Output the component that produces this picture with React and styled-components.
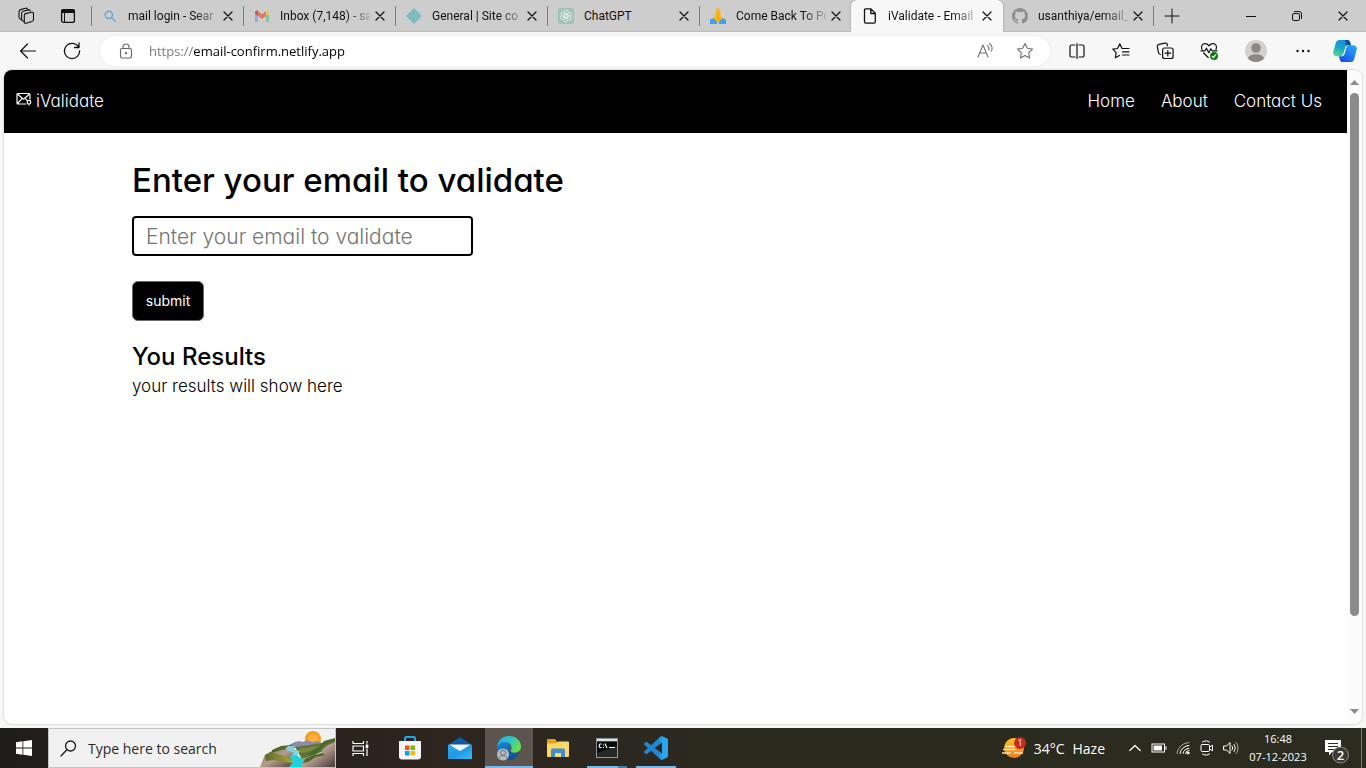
import React from 'react';
import styled, { createGlobalStyle, css } from 'styled-components';

const UI = '"Open Sans", "Noto Sans", sans-serif';
const SITE = 'Inter, "Open Sans", sans-serif';

const Global = createGlobalStyle`
  *, *::before, *::after { box-sizing: border-box; }
  body { margin: 0; font-family: ${UI}; font-size: 12px; color: #111; background: #f7f7f7; }
  button, input { font: inherit; color: inherit; }
  button { border: 0; padding: 0; background: none; cursor: pointer; }
  h1, h2, p, ul { margin: 0; padding: 0; }
  svg { display: block; flex: none; }
`;

const Window = styled.div`
  display: flex;
  flex-direction: column;
  min-height: 100vh;
`;

/* ---------- tab strip ---------- */

const TabStrip = styled.div`
  display: flex;
  height: 32px;
  background: #cdcdcd;
  box-shadow: inset 0 -1px 0 #bdbdbd;
`;

const separator = css`
  &::after {
    content: '';
    position: absolute;
    right: 0;
    top: 6px;
    width: 1px;
    height: 20px;
    background: #7c7c7c;
  }
`;

const StripTools = styled.div`
  display: flex;
  flex: none;
  width: 92px;
  padding: 0 3px 0 5px;
  align-items: center;
  position: relative;
  ${separator}
`;

const IconButton = styled.button`
  display: flex;
  flex: none;
  align-items: center;
  justify-content: center;
  width: ${(p) => p.$w || 44}px;
  height: 100%;
  margin: 0 ${(p) => p.$gap || 0}px;
  color: ${(p) => p.$color || '#111'};
`;

const Tab = styled.div`
  position: relative;
  display: flex;
  align-items: center;
  flex: 0 1 152px;
  min-width: 0;
  padding: 0 8px 0 10px;
  gap: 10px;
  ${(p) => (p.$active
    ? 'margin: 0 -1px; padding-left: 11px; background: #f7f7f7; border-radius: 6px 6px 0 0; box-shadow: 0 0 2px #8a8a8a; clip-path: inset(0 -3px 0 -3px);'
    : '')}
  ${(p) => (p.$rule ? separator : '')}
`;

const TabTitle = styled.span`
  flex: 1;
  min-width: 0;
  font-family: Roboto, ${UI};
  white-space: nowrap;
  line-height: 20px;
  ${(p) => (p.$fade ? 'mask-image: linear-gradient(90deg, #000 calc(100% - 24px), rgba(0, 0, 0, 0.15));' : '')}
`;

const TabClose = styled.button`
  display: flex;
  flex: none;
  align-items: center;
  justify-content: center;
  width: 16px;
  height: 16px;
  margin-left: -8px;
`;

const WindowControls = styled.div`
  display: flex;
  margin-left: auto;
`;

/* ---------- toolbar ---------- */

const Toolbar = styled.div`
  display: flex;
  align-items: center;
  height: 38px;
  padding: 0 1px 0 6px;
  background: #f7f7f7;
`;

const AddressBar = styled.div`
  display: flex;
  flex: 1;
  align-items: center;
  height: 30px;
  margin: 0 5px 0 6px;
  padding: 0 5px 0 18px;
  border-radius: 15px;
  background: #fff;
  box-shadow: 0 0 3px #e4e4e4;
`;

const AddressInput = styled.input`
  flex: 1;
  min-width: 0;
  height: 24px;
  margin-left: 15px;
  padding: 0;
  border: 0;
  outline: 0;
  font-size: 13px;
  color: transparent;
  background: linear-gradient(90deg, #767676 44px, #000 44px);
  background-clip: text;
`;

/* ---------- page ---------- */

const Viewport = styled.div`
  display: flex;
  flex: 1;
  margin: 0 4px 4px;
  border-radius: 8px;
  overflow: hidden;
  background: #fff;
  box-shadow: 0 0 2px #a8a8a8;
`;

const Page = styled.div`
  flex: 1;
  min-width: 0;
  font-family: ${SITE};
  font-feature-settings: 'cv11';
  font-size: 17px;
  font-weight: 300;
  color: #000;
`;

const NavBar = styled.header`
  display: flex;
  align-items: center;
  justify-content: space-between;
  height: 63px;
  padding: 0 25px 2px 12px;
  background: #000;
  color: #fff;
`;

const Brand = styled.a`
  display: flex;
  gap: 4px;
  color: inherit;
  text-decoration: none;
`;

const NavLinks = styled.nav`
  display: flex;
  gap: 26px;
`;

const NavLink = styled.a`
  color: inherit;
  text-decoration: none;
`;

const Main = styled.main`
  display: flex;
  flex-direction: column;
  align-items: flex-start;
  padding: 23px 24px 24px 128px;
`;

const Title = styled.h1`
  font-size: 33px;
  font-weight: 500;
  line-height: 48px;
`;

const Form = styled.form`
  display: flex;
  flex-direction: column;
  align-items: flex-start;
  gap: 25px;
  margin: 12px 0 18px;
`;

const EmailInput = styled.input`
  width: 341px;
  max-width: 100%;
  height: 40px;
  padding: 0 12px;
  border: 2px solid #000;
  border-radius: 4px;
  font-size: 21px;
  &::placeholder { color: #757575; opacity: 1; }
`;

const Submit = styled.button`
  width: 72px;
  height: 40px;
  padding-bottom: 2px;
  border: 1px solid #6b6b6b;
  border-radius: 6px;
  background: #000;
  color: #fff;
  font-size: 14px;
  font-weight: 400;
`;

const Subtitle = styled.h2`
  font-size: 24px;
  font-weight: 500;
  line-height: 36px;
`;

const Result = styled.p`
  line-height: 22px;
`;

const ScrollBar = styled.div`
  display: flex;
  flex-direction: column;
  align-items: center;
  width: 15px;
  padding: 10px 0;
  background: #fbfbfb;
`;

const ScrollTrack = styled.div`
  flex: 1;
  width: 9px;
  margin: 8px 0;
`;

const ScrollThumb = styled.div`
  height: 86%;
  border-radius: 5px;
  background: #8b8b8b;
`;

/* ---------- task bar ---------- */

const TaskBar = styled.footer`
  display: flex;
  height: 40px;
  background: linear-gradient(90deg, #1f1d1a, #2d241f 30%, #2b2a1f 52%, #2b2b20);
  color: #fff;
`;

const SearchBox = styled.label`
  display: flex;
  flex: none;
  align-items: center;
  width: 288px;
  padding-left: 11px;
  border: 1px solid #c4c4c4;
  background: #f1f1f1;
  color: #1c1c1c;
`;

const SearchInput = styled.input`
  flex: 1;
  min-width: 0;
  margin-left: 11px;
  padding: 0;
  border: 0;
  outline: 0;
  background: none;
  font-size: 14px;
  &::placeholder { color: #2b2b2b; opacity: 1; }
`;

const TaskButton = styled.button`
  display: flex;
  flex: none;
  align-items: center;
  justify-content: center;
  width: ${(p) => p.$w || 49}px;
  height: 40px;
  color: #fff;
  background: ${(p) => (p.$active ? '#5b544f' : 'transparent')};
  box-shadow: ${(p) => (p.$active ? 'inset 0 -2px 0 #76b9ed' : 'none')};
`;

const RunningButton = styled(TaskButton)`
  background: linear-gradient(90deg, #76b9ed ${(p) => (p.$stacked ? '31px, #4c7ba0 31px' : '40px')}) center bottom / 40px 2px no-repeat;
`;

const Tray = styled.div`
  display: flex;
  align-items: center;
  margin-left: auto;
`;

const Weather = styled.button`
  display: flex;
  align-items: center;
  gap: 8px;
  height: 40px;
  margin-right: 18px;
  color: #fff;
  font-size: 14px;
`;

const TrayButton = styled.button`
  display: flex;
  align-items: center;
  justify-content: center;
  width: 24px;
  height: 40px;
  color: #fff;
`;

const Clock = styled.button`
  width: 70px;
  height: 40px;
  color: #fff;
  font-size: 11px;
  line-height: 18px;
  white-space: nowrap;
`;

const ActionCenter = styled.button`
  display: flex;
  align-items: center;
  justify-content: center;
  width: 48px;
  height: 40px;
  color: #fff;
`;

const DesktopEdge = styled.button`
  width: 5px;
  height: 40px;
  border-left: 1px solid #77766e;
`;

/* ---------- icons ---------- */

const Line = ({ s = 16, w = 1, vb = 16, children, ...rest }) => (
  <svg width={s} height={s} viewBox={`0 0 ${vb} ${vb}`} fill="none" stroke="currentColor" strokeWidth={w} strokeLinecap="round" strokeLinejoin="round" aria-hidden="true" {...rest}>
    {children}
  </svg>
);

const Workspaces = () => (
  <Line s={18} vb={18} w={1.1}>
    <path d="M8.600 6.600l6-1.300c1.200-.2 1.900.3 1.900 1.500v5.700c0 1.100-.5 1.700-1.600 2l-5.800 1.800c-1.100.3-1.800-.2-1.800-1.400V8.500c0-1.100.4-1.700 1.300-1.900z" />
    <path d="M7 14.500l-1.200-.5c-.8-.4-1.200-1-1.200-1.900V6.400c0-1.100.5-1.800 1.600-2.100l5.200-1.400c.9-.2 1.600.1 1.900 1M4.400 12.500l-1-.4C2.500 11.700 2 11 2 10V4.700c0-1.100.6-1.800 1.700-2.100l4.800-1.400c.9-.3 1.600 0 1.900.7" />
  </Line>
);

const TabActions = () => (
  <Line w={1.3}>
    <rect x="1.600" y="1.600" width="12.800" height="12.800" rx="2" />
    <path fill="currentColor" stroke="none" d="M1 5V3.500A2.500 2.500 0 013.500 1h9A2.500 2.500 0 0115 3.500V5z" />
    <path d="M4.500 5v9" strokeWidth="1" />
  </Line>
);

const Close = ({ s = 10 }) => <Line s={s} vb={10} w={1.2}><path d="M1 1l8 8M9 1L1 9" /></Line>;

const SearchFav = () => <Line w={1.5} color="#69a5d6"><circle cx="6.800" cy="6.800" r="3.600" /><path d="M9.700 9.700l3.600 3.600" /></Line>;

const GmailFav = () => (
  <svg width="16" height="16" viewBox="0 0 16 16" aria-hidden="true">
    <path fill="#85aeea" d="M1 5l3 2v7H2a1 1 0 01-1-1z" />
    <path fill="#7fc596" d="M15 5l-3 2v7h2a1 1 0 001-1z" />
    <path fill="#e5746c" d="M4 3.200l4 3 4-3V8l-4 3-4-3z" />
    <path fill="#c65b57" d="M1 4.200C1 2.600 2.800 2 4 3v5L1 5.800z" />
    <path fill="#edc95c" d="M15 4.200C15 2.600 13.200 2 12 3v5l3-2.200z" />
  </svg>
);

const NetlifyFav = () => (
  <svg width="16" height="16" viewBox="0 0 16 16" aria-hidden="true"><path fill="#7cbcba" d="M8 0l8 8-8 8-8-8z" /></svg>
);

const ChatFav = () => (
  <svg width="16" height="16" viewBox="0 0 16 16" aria-hidden="true">
    <rect width="16" height="16" rx="2.500" fill="#a3c1b6" />
    <g fill="none" stroke="#e8f0ed" strokeWidth=".9">
      {[0, 60, 120, 180, 240, 300].map((a) => (
        <path key={a} transform={`rotate(${a} 8 8)`} d="M6.200 7V4.500a2.200 2.200 0 014.100-1.100M6.200 7L8 5.900l3 1.700" />
      ))}
    </g>
  </svg>
);

const PrayFav = () => (
  <svg width="16" height="16" viewBox="0 0 16 16" aria-hidden="true">
    <path fill="#fbb70f" d="M8 0C6.900 0 6.400 1 6.200 2.200L5.300 7 3.800 10.500 3 12.500l3 2.300 2-1.300 2 1.300 3-2.300-.8-2L10.700 7l-.9-4.800C9.600 1 9.100 0 8 0z" />
    <path stroke="#f0980c" strokeWidth=".6" d="M8 5v8.500" />
    <path fill="#3f9ff2" d="M0 11.500l3.500-1.300L7 13.800V16H0zM16 11.500l-3.500-1.300L9 13.800V16h7z" />
  </svg>
);

const PageFav = () => (
  <Line w={1.3}><path d="M3.500.9h5.500l4.300 4.300v8.600a1.400 1.400 0 01-1.400 1.400H3.900a1.400 1.400 0 01-1.400-1.400V2A1 1 0 013.500.9zM8.800 1v4.500h4.400" /></Line>
);

const GithubFav = () => (
  <svg width="16" height="16" viewBox="0 0 16 16" aria-hidden="true">
    <path fill="#8c8f92" d="M8 0C3.580 0 0 3.580 0 8c0 3.540 2.290 6.530 5.470 7.590.4.070.55-.17.55-.38 0-.19-.01-.82-.01-1.490-2.010.37-2.530-.49-2.690-.94-.09-.23-.48-.94-.82-1.130-.28-.15-.68-.52-.01-.53.63-.01 1.080.58 1.230.82.72 1.210 1.870.87 2.330.66.07-.52.28-.87.51-1.070-1.780-.2-3.640-.89-3.640-3.950 0-.87.31-1.590.82-2.150-.08-.2-.36-1.020.08-2.120 0 0 .67-.21 2.200.82a7.600 7.600 0 014 0c1.530-1.040 2.200-.82 2.200-.82.44 1.100.16 1.920.08 2.120.51.56.82 1.270.82 2.150 0 3.070-1.870 3.750-3.650 3.950.29.25.54.73.54 1.480 0 1.070-.01 1.930-.01 2.200 0 .21.15.46.55.38A8 8 0 0016 8c0-4.420-3.580-8-8-8z" />
  </svg>
);

const BrandIcon = () => (
  <Line w={1.200}>
    <path d="M10 13H2a1 1 0 01-1-1V3.500a1 1 0 011-1h11a1 1 0 011 1V8M1.500 3l6 5.200 6-5.200M1.500 12.500l4.200-4.700M9.500 7.800l1.200 1.200" />
    <circle cx="13" cy="11.200" r="1.800" />
    <path d="M13 13v1" />
  </Line>
);

const Copilot = () => (
  <svg width="24" height="24" viewBox="0 0 24 24" aria-hidden="true">
    <defs>
      <linearGradient id="cpA" x1="0.600" y1="0" x2="0.200" y2="1"><stop stopColor="#1390e8" /><stop offset=".5" stopColor="#18a8c0" /><stop offset="1" stopColor="#5fd68b" /></linearGradient>
      <linearGradient id="cpB" x1="1" y1="0" x2="0.200" y2="1"><stop stopColor="#25b4f2" /><stop offset=".5" stopColor="#2180f4" /><stop offset="1" stopColor="#1551d6" /></linearGradient>
    </defs>
    <path fill="url(#cpA)" d="M6.500 1h7.700c1.800 0 2.500 1 3 2.600l.8 2.600h-2.500c-1.600 0-2.500.8-3 2.400l-1.800 6c-.6 1.800-1.600 2.600-3.400 2.600H3.500C.8 17.200-.3 15 .4 12.300L2.700 4.200C3.300 2.100 4.500 1 6.500 1z" />
    <path fill="url(#cpB)" d="M17.500 23H9.800c-1.800 0-2.500-1-3-2.600L6 17.200h2.500c1.600 0 2.500-.8 3-2.400l1.800-6c.6-1.800 1.600-2.600 3.400-2.600h3.800c2.700 0 3.800 2.200 3.100 4.900l-2.300 8.700c-.6 2.100-1.800 3.200-3.800 3.200z" />
    <path fill="#0d4f9d" d="M12 1h2.200c1.800 0 2.500 1 3 2.600l.8 2.600h-2.500c-1 0-1.800.3-2.300 1z" />
    <path fill="#f7f7f7" d="M15.800 6.300c-1.400.1-2 .9-2.500 2.300l-1.900 6.200c-.4 1.300-.9 2.100-2.100 2.400H8.200c1.300-.3 1.900-1.300 2.300-2.600l1.900-6.200c.5-1.500 1.300-2.100 3.400-2.100z" />
  </svg>
);

const Avatar = () => (
  <svg width="22" height="22" viewBox="0 0 22 22" aria-hidden="true">
    <circle cx="11" cy="11" r="11" fill="#d3d0cd" />
    <circle cx="11" cy="8" r="4.800" fill="#8b8785" />
    <path fill="#8b8785" d="M2.800 18.200C4 15.300 7 14.200 11 14.200s7 1.100 8.200 4A11 11 0 0111 22a11 11 0 01-8.200-3.800z" />
  </svg>
);

const Landscape = () => (
  <svg width="76" height="38" viewBox="0 0 76 38" aria-hidden="true">
    <defs>
      <linearGradient id="rock" x1="0" y1="0" x2="1" y2="1"><stop stopColor="#6d5f56" /><stop offset=".5" stopColor="#b79e90" /><stop offset="1" stopColor="#453a37" /></linearGradient>
      <linearGradient id="hill" x1="0" y1="0" x2="1" y2="0"><stop stopColor="#5f6b2e" /><stop offset="1" stopColor="#b0ab30" /></linearGradient>
    </defs>
    <circle cx="54" cy="10" r="8" fill="#f99d1c" />
    <circle cx="54" cy="10" r="5" fill="#fdb13c" />
    <path fill="#8c8ca4" d="M30 16l6-3 4-1 4 1 4-2 5 2 5-1 8 3v4H34z" />
    <path fill="url(#rock)" d="M1 38l5-12 12-7 12-2 8 5-4 16z" />
    <path fill="#4f6a26" d="M13 21l9-4 10-1 4 2-6 2-8 1-9 3z" />
    <path fill="url(#hill)" d="M6 26l6-3 7 2 9 3 8 4-3 2-9-1-9-2-8 1z" />
    <path fill="#60733a" d="M36 18l14-2 14-2 12-4v6L56 26l-13 4z" />
    <path fill="#7b8b3c" d="M40 20l13-2 10-2-12 6-9 2z" />
    <path fill="url(#rock)" d="M76 13v25H41l3-8 7-3 10-1 3-6 5-4z" />
    <path fill="#496b25" d="M76 9l-11 3-5 6-8 5-5 3 9-1 6-5 4-5 10-3zM52 27l11-3 3 2-9 2-8 5-5 1 2-4z" />
    <path fill="#7fd6de" d="M29 17h8l-5 3 9 2-2 4-3 2h-5l4-4-9-4z" />
    <path fill="#1fd2d9" d="M31 27l6-1 7 4-1 8H30l4-5z" />
  </svg>
);

const Store = () => (
  <svg width="24" height="24" viewBox="0 0 24 24" aria-hidden="true">
    <path fill="none" stroke="#25a4ea" strokeWidth="2" d="M7 6V2.200Q7 1 8.200 1h7.600Q17 1 17 2.200V6" />
    <path fill="#f5f5f5" d="M1 5h22v15.500a3 3 0 01-3 3H4a3 3 0 01-3-3z" />
    <path fill="#f25022" d="M7 9.500h4.500V14H7z" /><path fill="#7fba00" d="M12.500 9.500H17V14h-4.500z" />
    <path fill="#00a4ef" d="M7 15h4.500v4.500H7z" /><path fill="#ffb900" d="M12.500 15H17v4.500h-4.500z" />
  </svg>
);

const Mail = () => (
  <svg width="24" height="24" viewBox="0 0 24 24" aria-hidden="true">
    <defs><linearGradient id="mail" x1="0" y1="0" x2="1" y2="1"><stop stopColor="#2bb0ef" /><stop offset=".5" stopColor="#2298e4" /><stop offset="1" stopColor="#2fc0f5" /></linearGradient></defs>
    <path fill="#0f59a8" d="M0 9L12 1l12 8z" />
    <path fill="#f1f4f8" d="M1 8.500h22L12 16z" />
    <path fill="url(#mail)" d="M0 8.500l12 6.500 12-6.500V23H0z" />
  </svg>
);

const Edge = () => (
  <svg width="26" height="26" viewBox="0 0 26 26" aria-hidden="true">
    <defs>
      <linearGradient id="edA" x1="0" y1="0" x2="1" y2=".5"><stop stopColor="#2aa7e6" /><stop offset=".6" stopColor="#32c8c0" /><stop offset="1" stopColor="#6adf4a" /></linearGradient>
      <linearGradient id="edB" x1="0" y1="0" x2=".6" y2="1"><stop stopColor="#1b8ede" /><stop offset="1" stopColor="#0c4f9e" /></linearGradient>
    </defs>
    <path fill="url(#edB)" d="M1.200 11C2 7 6 5.500 9 6c4 .4 6 3.500 5 6-1.500 4.500 3 7 9.500 5.500C21.500 22 17.500 25 13 25 6 25 0 19 1.200 11z" />
    <path fill="url(#edA)" d="M1.200 12C1.500 5.500 6.500 1 13 1c7 0 12 5 12 10.500 0 4-3 6.200-6.500 6.200-3 0-4.500-1.300-3.500-2.700 1.500-2.200.5-7.500-5.500-8C5 6.700 2 9 1.200 12z" />
    <circle cx="7" cy="19.500" r="6" fill="#b7bbc0" />
    <circle cx="7" cy="17.800" r="2.500" fill="none" stroke="#6d7278" />
    <path fill="none" stroke="#6d7278" d="M3 23.200c1-3.300 7-3.300 8 0" />
  </svg>
);

const Explorer = () => (
  <svg width="22" height="20" viewBox="0 0 22 20" aria-hidden="true">
    <path fill="#e3a21a" d="M0 2a1 1 0 011-1h7l2 2.500V6H0z" />
    <path fill="#ffd766" d="M0 5.500l9-.2L11 3.500h10a1 1 0 011 1V18a1 1 0 01-1 1H1a1 1 0 01-1-1z" />
    <path fill="#3f8ed0" d="M4 19v-7a1.500 1.500 0 011.500-1.500h11A1.500 1.500 0 0118 12v7h-4v-4H8v4z" />
  </svg>
);

const Terminal = () => (
  <svg width="22" height="20" viewBox="0 0 22 20" aria-hidden="true">
    <path fill="#8f9498" d="M0 0h22v20H0z" /><path fill="#dfe2e4" d="M1 1h20v2H1z" />
    <path fill="#0a0a0a" d="M1 3.500h20V19H1z" />
    <path fill="#444" d="M1 15L21 8v11H1z" opacity=".5" />
    <path stroke="#fff" strokeWidth="1.100" fill="none" d="M5.500 6H4L3.300 7v2L4 9.500h1.500M7.500 6.500v1M7.500 9v1M9 5.500l2 4.500M13 9.500h6" />
  </svg>
);

const Code = () => (
  <svg width="24" height="24" viewBox="0 0 24 24" aria-hidden="true">
    <defs><linearGradient id="code" x1="0" y1="0" x2="1" y2="0"><stop offset=".6" stopColor="#1f86cf" /><stop offset=".8" stopColor="#2ba6f0" /></linearGradient></defs>
    <path fill="url(#code)" d="M23.150 2.587L18.210.21a1.494 1.494 0 0 0-1.705.29l-9.460 8.630-4.120-3.128a.999.999 0 0 0-1.276.057L.327 7.261A1 1 0 0 0 .326 8.740L3.899 12 .326 15.260a1 1 0 0 0 .001 1.479L1.650 17.940a.999.999 0 0 0 1.276.057l4.120-3.128 9.460 8.630a1.492 1.492 0 0 0 1.704.290l4.942-2.377A1.500 1.500 0 0 0 24 20.060V3.939a1.500 1.500 0 0 0-.850-1.352zm-5.146 14.861L10.826 12l7.178-5.448v10.896z" />
  </svg>
);

const WeatherIcon = () => (
  <svg width="24" height="22" viewBox="0 0 24 22" aria-hidden="true">
    <defs><linearGradient id="sun" x1="0" y1="0" x2="0" y2="1"><stop stopColor="#fdc51c" /><stop offset="1" stopColor="#ee7d20" /></linearGradient></defs>
    <circle cx="12" cy="11" r="10" fill="url(#sun)" />
    <path stroke="#fbe3b4" strokeWidth="1.500" d="M3 9.500h10M1 12.500h12M0 16h9M12 16h9" />
    <circle cx="18" cy="6" r="6" fill="#c42b1c" />
    <text x="18" y="9" fill="#fff" fontSize="9" textAnchor="middle">1</text>
  </svg>
);

const Notifications = () => (
  <svg width="26" height="32" viewBox="0 0 26 32" aria-hidden="true">
    <path fill="#fff" d="M1 8h16v12H8l-3 3.500V20H1z" />
    <path stroke="#2b2b20" d="M4 11.500h10M4 14.500h10M4 17.500h6" />
    <circle cx="16.500" cy="23" r="8" fill="#3b3b36" stroke="#8d8d86" />
    <text x="16.500" y="28" fill="#fff" fontSize="13" fontWeight="600" textAnchor="middle">2</text>
  </svg>
);

const tabs = [
  { title: 'mail login - Sear', icon: SearchFav, fade: true },
  { title: 'Inbox (7,148) - sa', icon: GmailFav, fade: true },
  { title: 'General | Site co', icon: NetlifyFav, fade: true },
  { title: 'ChatGPT', icon: ChatFav },
  { title: 'Come Back To Po', icon: PrayFav, noRule: true, fade: true },
  { title: 'iValidate - Email', icon: PageFav, active: true, noRule: true, fade: true },
  { title: 'usanthiya/email_', icon: GithubFav, fade: true },
];

const navItems = ['Home', 'About', 'Contact Us'];

export default function App() {
  return (
    <Window>
      <Global />
      <TabStrip>
        <StripTools>
          <IconButton $w={42} aria-label="Workspaces"><Workspaces /></IconButton>
          <IconButton $w={42} aria-label="Tab actions"><TabActions /></IconButton>
        </StripTools>
        {tabs.map(({ title, icon: Icon, active, noRule, fade }) => (
          <Tab key={title} $active={active} $rule={!noRule}>
            <Icon />
            <TabTitle $fade={fade}>{title}</TabTitle>
            <TabClose aria-label="Close tab"><Close /></TabClose>
          </Tab>
        ))}
        <IconButton $w={36} aria-label="New tab"><Line><path d="M8 1v14M1 8h14" /></Line></IconButton>
        <WindowControls>
          <IconButton $w={46} aria-label="Minimize"><Line s={10} vb={10}><path d="M0 5.500h10" /></Line></IconButton>
          <IconButton $w={46} aria-label="Restore">
            <Line s={10} vb={10}><rect x=".5" y="2.500" width="7" height="7" rx="1.500" /><path d="M2.500.5H7a2.500 2.500 0 012.500 2.500v4.500" /></Line>
          </IconButton>
          <IconButton $w={46} aria-label="Close window"><Close /></IconButton>
        </WindowControls>
      </TabStrip>

      <Toolbar>
        <IconButton aria-label="Back"><Line w={1.2}><path d="M.6 8h15M7.500 1L.6 8l6.900 7" /></Line></IconButton>
        <IconButton aria-label="Refresh"><Line s={18} vb={18} w={1.3}><path d="M16.600 9A7.600 7.600 0 119 1.400c2.800 0 5 1.200 6.800 3.600M16 1v4.500h-4.500" /></Line></IconButton>
        <AddressBar>
          <Line s={16} w={1.1} color="#666"><rect x="2.500" y="5.500" width="11" height="9.500" rx="1.500" /><path d="M5 5.500V4a3 3 0 016 0v1.500" /><circle cx="8" cy="10.200" r=".6" fill="#666" /></Line>
          <AddressInput aria-label="Address" defaultValue="https://email-confirm.netlify.app" />
          <IconButton $w={40} $color="#707070" aria-label="Read aloud"><Line s={18} vb={18} w={1.1}><path d="M2 15L7 3l5 12M3.800 11h6.500M11.500 3.500c1.400 1 1.800 2.500 1.200 4.500M13.500 1.500c2.600 1.700 3.200 4.300 2 7.500" /></Line></IconButton>
          <IconButton $w={40} $color="#707070" aria-label="Add favourite"><Line s={18} vb={18} w={1.1}><path d="M9 1.500l2.300 4.800 5.200.7-3.800 3.700.9 5.300L9 13.500 4.400 16l.9-5.300L1.500 7l5.200-.7z" /></Line></IconButton>
        </AddressBar>
        <IconButton aria-label="Split screen"><Line w={1.2}><path d="M6 2H2.500A1.500 1.500 0 001 3.500v9A1.500 1.500 0 002.500 14H6M10 2h3.500A1.500 1.500 0 0115 3.500v9a1.500 1.500 0 01-1.500 1.500H10M8 .6v14.800" /></Line></IconButton>
        <IconButton aria-label="Favourites"><Line s={18} vb={18} w={1.2}><path d="M10 6.500L7.800 1.800 5.500 6.500.8 7.200 4.200 10.600l-.9 5.200 4.200-2.300M10 6.500h7M10.500 9.800H17M10.500 13H17" /></Line></IconButton>
        <IconButton aria-label="Collections"><Line s={18} vb={18} w={1.2}><rect x="6.600" y="6" width="10.500" height="10.500" rx="2" /><path d="M11.800 8.500v5.500M9 11.200h5.600M4.500 12.500c-1.200-.1-1.800-.8-2-1.800L1.300 4.600C1.100 3.400 1.700 2.600 2.900 2.300L9 1.100c1.300-.2 2.100.3 2.400 1.600v1" /></Line></IconButton>
        <IconButton aria-label="Browser essentials">
          <Line s={18} vb={18} w={1.2}>
            <path d="M2 7.500C.5 4 2.600 1.600 5 1.600c1.700 0 3 .8 4 2.200 1-1.400 2.300-2.200 4-2.200 2.600 0 4.500 2.500 3 5.900M1 8.800h4l1.500-2.600 2.300 4.500 2-4 1.300 2.100H17M3.600 11l4.600 4.500" />
            <circle cx="14" cy="14" r="4" fill="#107c10" stroke="none" /><path d="M12.300 14.500l1.200 1 2.300-2.700" stroke="#fff" />
          </Line>
        </IconButton>
        <IconButton $gap={3} aria-label="Profile"><Avatar /></IconButton>
        <IconButton aria-label="Settings and more"><Line w={0}><g fill="#111"><circle cx="2.500" cy="8" r="1.200" /><circle cx="8" cy="8" r="1.200" /><circle cx="13.500" cy="8" r="1.200" /></g></Line></IconButton>
        <IconButton $w={40} aria-label="Copilot"><Copilot /></IconButton>
      </Toolbar>

      <Viewport>
        <Page>
          <NavBar>
            <Brand href="#"><BrandIcon />iValidate</Brand>
            <NavLinks>{navItems.map((n) => <NavLink key={n} href="#">{n}</NavLink>)}</NavLinks>
          </NavBar>
          <Main>
            <Title>Enter your email to validate</Title>
            <Form onSubmit={(e) => e.preventDefault()}>
              <EmailInput type="email" aria-label="Email" placeholder="Enter your email to validate" />
              <Submit type="submit">submit</Submit>
            </Form>
            <Subtitle>You Results</Subtitle>
            <Result>your results will show here</Result>
          </Main>
        </Page>
        <ScrollBar>
          <svg width="9" height="5" viewBox="0 0 9 5" aria-hidden="true"><path fill="#8b8b8b" d="M4.500 0L9 5H0z" /></svg>
          <ScrollTrack><ScrollThumb /></ScrollTrack>
          <svg width="9" height="5" viewBox="0 0 9 5" aria-hidden="true"><path fill="#8b8b8b" d="M0 0h9L4.500 5z" /></svg>
        </ScrollBar>
      </Viewport>

      <TaskBar>
        <TaskButton $w={48} aria-label="Start">
          <svg width="16" height="16" viewBox="0 0 16 16" aria-hidden="true"><path fill="#fff" d="M0 2.200L6.500 1.300v6.200H0zM7.300 1.200L16 0v7.500H7.300zM0 8.400h6.500v6.300L0 13.800zM7.300 8.400H16V16l-8.700-1.200z" /></svg>
        </TaskButton>
        <SearchBox>
          <Line s={17} vb={17} w={1.3}><circle cx="10.500" cy="6" r="5" /><path d="M6.800 9.800L1 16" /></Line>
          <SearchInput aria-label="Search" placeholder="Type here to search" />
          <Landscape />
        </SearchBox>
        <TaskButton aria-label="Task view">
          <Line s={17} vb={17} w={1.2} strokeLinecap="butt"><path d="M1 1v2.500h10.500V1M1 16v-2.500h10.500V16M1 6h10.500v5H1zM15 1v2.500M15 8.500V16" /><path d="M15 4.500V8" strokeWidth="2.600" /></Line>
        </TaskButton>
        <TaskButton $w={50} aria-label="Microsoft Store"><Store /></TaskButton>
        <TaskButton $w={50} aria-label="Mail"><Mail /></TaskButton>
        <TaskButton $w={48} $active aria-label="Edge"><Edge /></TaskButton>
        <TaskButton aria-label="File Explorer"><Explorer /></TaskButton>
        <RunningButton $stacked aria-label="Command Prompt"><Terminal /></RunningButton>
        <RunningButton aria-label="Visual Studio Code"><Code /></RunningButton>
        <Tray>
          <Weather><WeatherIcon /><span>34°C</span><span>Haze</span></Weather>
          <TrayButton aria-label="Hidden icons"><Line s={12} vb={12} w={1.2}><path d="M.8 8.500L6 3.500l5.200 5" /></Line></TrayButton>
          <TrayButton aria-label="Battery"><Line><rect x="1" y="4" width="12.500" height="8" strokeLinejoin="miter" /><path d="M2.500 5.500h8.500v5H2.500z" fill="#fff" stroke="none" /><path d="M15 6.500v3" /></Line></TrayButton>
          <TrayButton aria-label="Network"><Line><path d="M2 13.500A12 12 0 0114 2.500" opacity=".6" /><path d="M5 13.500a9 9 0 019-8M8 13.500a6 6 0 016-5M10.500 13.500a3.500 3.500 0 013.500-3" /><circle cx="13" cy="13" r="1" fill="#fff" /></Line></TrayButton>
          <TrayButton aria-label="Meet now"><Line><rect x="2" y="4.500" width="8.500" height="7" rx="1.200" /><path d="M10.500 7l3-1.700v5.400l-3-1.700M3.500 2C5.500.5 8.500.5 10.500 2M3.500 14c2 1.500 5 1.500 7 0" /></Line></TrayButton>
          <TrayButton aria-label="Volume"><Line><path d="M1 6h2.500L7 2.500v11L3.500 10H1zM9 6c.9 1.200.9 2.800 0 4M11 4.500c1.600 2 1.600 5 0 7" /><path d="M13 2.500c2.700 3 2.700 8 0 11" opacity=".6" /></Line></TrayButton>
          <Clock>16:48<br />07-12-2023</Clock>
          <ActionCenter aria-label="Notifications"><Notifications /></ActionCenter>
          <DesktopEdge aria-label="Show desktop" />
        </Tray>
      </TaskBar>
    </Window>
  );
}
